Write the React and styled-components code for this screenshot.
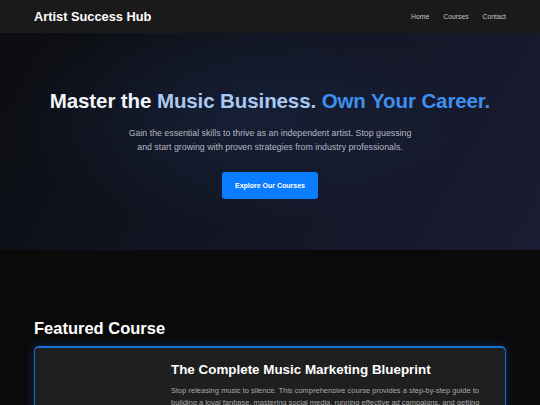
import React from "react";
import styled, { createGlobalStyle } from "styled-components";

const Global = createGlobalStyle`
  html, body { margin: 0; padding: 0; background: #0a0a0a; }
  body { font-family: "Liberation Sans", Arial, sans-serif; color: #fff; overflow: hidden; }
  * { box-sizing: border-box; }
`;

const Header = styled.header`
  height: 33px;
  background: #1a1a1a;
  display: flex;
  align-items: center;
  justify-content: space-between;
  padding: 0 34px;
`;

const Logo = styled.div`
  font-size: 12.8px;
  font-weight: 700;
  color: #fff;
  margin-top: -1px;
`;

const Nav = styled.nav`
  display: flex;
  gap: 14px;
`;

const NavLink = styled.span`
  font-size: 6.8px;
  color: #c4c4c4;
  cursor: pointer;
`;

const Hero = styled.section`
  height: 217px;
  background:
    radial-gradient(ellipse 60% 70% at 45% 40%, rgba(30, 50, 90, 0.35), transparent 70%),
    linear-gradient(120deg, #0c0d11 0%, #111522 45%, #1a1c33 100%);
  display: flex;
  flex-direction: column;
  align-items: center;
  padding-top: 56px;
`;

const Title = styled.h1`
  margin: 0;
  font-size: 20.5px;
  font-weight: 700;
  letter-spacing: -0.1px;
  color: #f2f4f8;
`;

const Accent = styled.span`
  color: ${(p) => p.$c};
`;

const Sub = styled.p`
  margin: 13px 0 0;
  width: 288px;
  text-align: center;
  font-size: 8.8px;
  line-height: 14px;
  color: #b4b8c0;
`;

const Button = styled.a`
  margin-top: 18px;
  width: 96px;
  height: 27px;
  border-radius: 3px;
  background: #0a7cff;
  color: #fff;
  font-size: 7px;
  font-weight: 700;
  display: flex;
  align-items: center;
  justify-content: center;
`;

const Section = styled.section`
  padding: 69px 34px 0;
  background: #0a0a0a;
`;

const SectionTitle = styled.h2`
  margin: 0 0 8px;
  font-size: 16.5px;
  font-weight: 700;
  color: #fff;
`;

const Card = styled.div`
  border: 1px solid #1a6fd8;
  border-top-width: 2px;
  border-radius: 5px;
  background: #1f1f1f;
  box-shadow: 0 0 10px rgba(20, 100, 220, 0.35);
  display: grid;
  grid-template-columns: 126px 1fr;
  gap: 10px;
  height: 120px;
`;

const ImgArea = styled.div`
  background: #1e1e1e;
  border-radius: 4px 0 0 4px;
`;

const CardBody = styled.div`
  padding: 14px 24px 0 0;
`;

const CardTitle = styled.h3`
  margin: 0;
  font-size: 13.4px;
  font-weight: 700;
  color: #fff;
`;

const CardText = styled.p`
  margin: 8px 0 0;
  font-size: 7.5px;
  line-height: 12px;
  color: #a8a8a8;
`;

export default function App() {
  return (
    <>
      <Global />
      <Header>
        <Logo>Artist Success Hub</Logo>
        <Nav>
          <NavLink>Home</NavLink>
          <NavLink>Courses</NavLink>
          <NavLink>Contact</NavLink>
        </Nav>
      </Header>
      <Hero>
        <Title>
          Master the <Accent $c="#a9c9f2">Music Business.</Accent>{" "}
          <Accent $c="#3d8ff0">Own Your Career.</Accent>
        </Title>
        <Sub>
          Gain the essential skills to thrive as an independent artist. Stop guessing and start growing with proven strategies from industry professionals.
        </Sub>
        <Button>Explore Our Courses</Button>
      </Hero>
      <Section>
        <SectionTitle>Featured Course</SectionTitle>
        <Card>
          <ImgArea />
          <CardBody>
            <CardTitle>The Complete Music Marketing Blueprint</CardTitle>
            <CardText>
              Stop releasing music to silence. This comprehensive course provides a step-by-step guide to building a loyal fanbase, mastering social media, running effective ad campaigns, and getting your music heard by the right people.
            </CardText>
          </CardBody>
        </Card>
      </Section>
    </>
  );
}
